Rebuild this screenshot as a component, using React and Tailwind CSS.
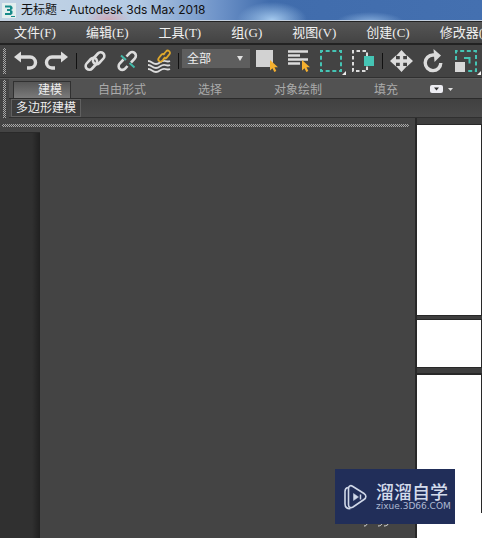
import React, { useState } from "react";

const menus = [
  ["文件", "(F)"],
  ["编辑", "(E)"],
  ["工具", "(T)"],
  ["组", "(G)"],
  ["视图", "(V)"],
  ["创建", "(C)"],
  ["修改器", "(M)"],
];

const tabs = ["自由形式", "选择", "对象绘制", "填充"];

function ToolButton({ label, children }) {
  return (
    <button type="button" aria-label={label} className="size-6 shrink-0 hover:bg-[#555]">
      <svg viewBox="0 0 24 24" fill="none" className="block size-6 overflow-visible">
        {children}
      </svg>
    </button>
  );
}

function Chain() {
  return (
    <g stroke="#dcdcdc" strokeWidth="2.600" strokeLinejoin="round">
      <path d="M9.800 9 13.900 4.500a3.700 3.700 0 0 1 5.500 5l-4.200 4.500a3.700 3.700 0 0 1-3.800 1" />
      <path d="M12.200 15 8.100 19.500a3.700 3.700 0 0 1-5.500-5l4.200-4.500a3.700 3.700 0 0 1 3.800-1" />
      <path d="M10.500 9a3.700 3.700 0 0 1 1.700 6M11.500 15a3.700 3.700 0 0 1-1.700-6" />
    </g>
  );
}

function BrokenChain() {
  return (
    <g strokeWidth="2.600">
      <path d="M10.500 7.500 13.400 4.300a3.700 3.700 0 0 1 5.500 5l-3.900 4.200" stroke="#dcdcdc" />
      <path d="M11.500 17 9.100 19.700a3.700 3.700 0 0 1-5.500-5l3.900-4.200" stroke="#dcdcdc" />
      <path d="M5 6.500l5 4.500M13.500 14l5 4.500" stroke="#43b8a8" strokeWidth="2" />
    </g>
  );
}

function Cursor() {
  return <path d="M14 11v10.500l2.500-2.300 1.800 3.800 2-1-1.800-3.700h3.500z" fill="#f5b02e" />;
}

function Grip({ className }) {
  return (
    <div
      className={`shrink-0 bg-[conic-gradient(#a8a8a8_25%,transparent_0_50%,#a8a8a8_0_75%,transparent_0)] bg-[length:2px_2px] ${className}`}
    />
  );
}

function Toolbar() {
  return (
    <div className="flex h-[33px] items-center overflow-hidden border-b border-[#303030] bg-[#434343]">
      <Grip className="ml-[3px] mr-[8px] h-[26px] w-[3px]" />
      <div className="flex shrink-0 gap-2">
        <ToolButton label="撤消">
          <path d="M5 8h11a5 5 0 0 1 0 11H13" stroke="#dcdcdc" strokeWidth="3.400" />
          <path d="M0 8 7 2.500v11z" fill="#dcdcdc" />
        </ToolButton>
        <ToolButton label="重做">
          <path d="M17 8H6a5 5 0 0 0 0 11H9" stroke="#dcdcdc" strokeWidth="3.400" />
          <path d="M22 8 15 2.500v11z" fill="#dcdcdc" />
        </ToolButton>
      </div>
      <div className="ml-[6px] mr-[7px] h-4 w-px shrink-0 bg-[#111]" />
      <div className="flex shrink-0 gap-2">
        <ToolButton label="选择并链接">
          <Chain />
        </ToolButton>
        <ToolButton label="取消链接选择">
          <BrokenChain />
        </ToolButton>
        <ToolButton label="绑定到空间扭曲">
          <path
            d="M0 12c4 0 4 3 8 3s5-4 9-3c2 .5 3 1 5 0M0 16c4 0 4 3 8 3s5-4 9-3c2 .5 3 1 5 0M0 20c4 0 4 3 8 3s5-4 9-3c2 .5 3 1 5 0"
            stroke="#dcdcdc"
            strokeWidth="1.800"
          />
          <path
            d="M15 6l3-3.500a2.200 2.200 0 0 1 3.500 2.700l-3 3.600a2.200 2.200 0 0 1-3.200 0M17.500 8l-3.200 3.700a2.200 2.200 0 0 1-3.500-2.700l2.700-3.300a2.200 2.200 0 0 1 3.300 0"
            stroke="#e0a92c"
            strokeWidth="1.800"
          />
        </ToolButton>
      </div>
      <div className="ml-[6px] mr-[3px] h-4 w-px shrink-0 bg-[#111]" />
      <div className="relative mb-[5px] mr-[6px] w-[68px] shrink-0">
        <select
          aria-label="选择过滤器"
          className="block h-[19px] w-full appearance-none bg-[#5e5e5e] pl-[5px] text-xs leading-[19px] text-[#eee] outline-none"
        >
          <option>全部</option>
        </select>
        <svg viewBox="0 0 6 5" className="pointer-events-none absolute right-[7px] top-[7px] h-[5px] w-[6px]">
          <path d="M0 0h6L3 5z" fill="#e0e0e0" />
        </svg>
      </div>
      <div className="flex shrink-0 gap-2">
        <ToolButton label="选择对象">
          <path d="M0 1h17v17H0z" fill="#d2d2d2" />
          <Cursor />
        </ToolButton>
        <ToolButton label="按名称选择">
          <path d="M0 2.500h20M0 6.500h12M0 10.500h20M0 14.500h12" stroke="#dcdcdc" strokeWidth="2.400" />
          <Cursor />
        </ToolButton>
        <ToolButton label="矩形选择区域">
          <path d="M1 2h20v20H1z" stroke="#45c4b4" strokeWidth="2" strokeDasharray="4 2.667" strokeDashoffset="2" />
          <path d="M26 22v4h-4z" fill="#eee" />
        </ToolButton>
        <ToolButton label="窗口/交叉">
          <path d="M15 7V2H1v20h14v-5" stroke="#dcdcdc" strokeWidth="2" strokeDasharray="3.500 2.500" />
          <path d="M12 7h10v10H12z" fill="#45c4b4" />
        </ToolButton>
      </div>
      <div className="ml-[6px] mr-[7px] h-4 w-px shrink-0 bg-[#111]" />
      <div className="flex shrink-0 gap-2">
        <ToolButton label="选择并移动">
          <path d="M11.500 4v16M3 12h17" stroke="#dcdcdc" strokeWidth="3.400" />
          <path d="M11.500 1l5.500 6H6zM11.500 23l5.500-6H6zM0 12l6-5.500v11zM23 12l-6-5.500v11z" fill="#dcdcdc" />
        </ToolButton>
        <ToolButton label="选择并旋转">
          <path d="M13 6h-2a7.800 7.800 0 1 0 7.800 8" stroke="#dcdcdc" strokeWidth="3.400" />
          <path d="M11.500 0 19 6.500 12.500 13z" fill="#dcdcdc" />
        </ToolButton>
        <ToolButton label="选择并缩放">
          <path d="M2 11V2h20v20H12" stroke="#45c4b4" strokeWidth="2" strokeDasharray="4 2.600" />
          <path d="M1 13h10v10H1z" fill="#d8d8d8" />
          <path d="M10 9h5.500v5.500" stroke="#45c4b4" strokeWidth="2" />
          <path d="M27 22v4h-4z" fill="#eee" />
        </ToolButton>
      </div>
    </div>
  );
}

function Ribbon() {
  const [active, setActive] = useState("建模");

  return (
    <div className="flex border-t border-[#5c5c5c] bg-[#434343]">
      <Grip className="mx-[3px] mt-px w-[3px]" />
      <div className="min-w-0 flex-1 overflow-hidden">
        <div className="flex h-5 items-end border-b border-[#2b2b2b] bg-[#525252] pl-1">
          <button
            type="button"
            onClick={() => setActive("建模")}
            aria-pressed={active === "建模"}
            className="mr-px h-[17px] w-[58px] shrink-0 border border-b-0 border-[#303030] bg-linear-to-b from-[#565656] to-[#7a7a7a] pl-4 text-xs leading-4 text-[#eee]"
          >
            建模
          </button>
          {tabs.map((tab) => (
            <button
              key={tab}
              type="button"
              onClick={() => setActive(tab)}
              aria-pressed={active === tab}
              className="h-[17px] shrink-0 px-[26px] text-xs leading-4 text-[#aaa]"
            >
              {tab}
            </button>
          ))}
          <button type="button" aria-label="功能区显示" className="mb-[5px] ml-[6px] shrink-0">
            <svg viewBox="0 0 24 8" className="block h-2 w-6">
              <rect width="13" height="8" rx="2" fill="#ededf2" />
              <path d="M4 2.500h5L6.500 5.500z" fill="#333" />
              <path d="M18 3h5l-2.500 3z" fill="#ddd" />
            </svg>
          </button>
        </div>
        <div className="flex h-[19px] border-b border-[#303030] bg-linear-to-b from-[#414141] to-[#4a4a4a] pl-[2px]">
          <button
            type="button"
            className="h-[18px] shrink-0 border border-[#606060] bg-[#3c3c3c] px-1 text-xs leading-4 text-[#eee]"
          >
            多边形建模
          </button>
        </div>
      </div>
    </div>
  );
}

function Watermark() {
  return (
    <div className="absolute bottom-[14px] right-[27px] flex h-[55px] w-[120px] items-center bg-[#212e59] pl-[9px]">
      <svg viewBox="0 0 24 26" fill="none" className="h-[26px] w-6 shrink-0" stroke="#cfd7e8" strokeLinejoin="round">
        <path d="M4.500 4.500c0-2.500 2-3.500 4-2.300l11.500 7.300c2.500 1.600 2.500 4.400 0 6L9 23c-2.300 1.400-4.500.3-4.500-2.200z" strokeWidth="1.600" />
        <path d="M4 3.500C1.800 4 1 5.400 1 7.500V20c0 3.500 2.500 5 5.500 4.500" strokeWidth="1.600" />
        <path d="M9.500 9.500v7l5-3.500z" fill="#cfd7e8" strokeWidth=".5" />
        <path d="M16.500 10.500v5" strokeWidth="1.500" />
      </svg>
      <div className="ml-2 text-[#d3dbeb]">
        <div className="text-[18px] font-medium leading-[18px]">溜溜自学</div>
        <div className="font-['DejaVu_Sans'] text-[9px] leading-[10px] text-[#aeb9d2]">zixue.3D66.COM</div>
      </div>
    </div>
  );
}

export default function App() {
  return (
    <div className="relative flex min-h-screen flex-col overflow-hidden bg-[#444] font-['Noto_Sans','Noto_Sans_CJK_SC',sans-serif]">
      <header className="flex h-[21px] items-center overflow-hidden border-b border-[#c3cfdf] bg-[radial-gradient(ellipse_35px_18px_at_272px_20px,#a4c9ee,transparent),radial-gradient(ellipse_34px_10px_at_370px_22px,#86addb,transparent),radial-gradient(ellipse_24px_12px_at_108px_20px,#cfa8b5,transparent),linear-gradient(to_right,#c3d4e4,#b5cbe4_28%,#6f94c9_45%,#406cac_56%,#4470b0)]">
        <svg viewBox="0 0 14 15" fill="none" className="ml-[2px] h-[15px] w-[14px] shrink-0">
          <path d="M0 0h14v15H0z" fill="#e3eeee" />
          <path d="M3 2.500h6l1.500 1.500v2L9 7l1.500 1v2.500L9 12H3v-2h5V8H5V6h3V4.500H3z" fill="#168a89" />
          <path d="M9 13.500h4" stroke="#168a89" />
        </svg>
        <h1 className="ml-[5px] whitespace-nowrap font-['Inter','Noto_Sans_CJK_SC',sans-serif] text-xs leading-5 text-[#111]">
          无标题 - Autodesk 3ds Max 2018
        </h1>
      </header>
      <nav className="flex h-6 items-center gap-[30px] overflow-hidden border-b-2 border-t border-[#222] bg-linear-to-b from-[#565656] to-[#434343] pl-[14px] text-[13px] leading-5 text-[#f0f0f0]">
        {menus.map(([name, key]) => (
          <button
            key={name}
            type="button"
            className="shrink-0 whitespace-nowrap font-['Liberation_Serif','Noto_Sans_CJK_SC',serif]"
          >
            {name}
            {key}
          </button>
        ))}
      </nav>
      <Toolbar />
      <Ribbon />
      <main className="flex flex-1">
        <section className="flex min-w-0 flex-1 flex-col">
          <Grip className="ml-[2px] mr-[6px] mt-[6px] h-[3px]" />
          <div className="mt-[5px] w-10 flex-1 border-t border-[#2a2a2a] bg-linear-to-r from-[#303030] from-80% to-[#202020]" />
        </section>
        <section className="flex w-[67px] shrink-0 flex-col border-l-2 border-[#282828] bg-[#3e3e3e] pt-[6px]">
          <div className="h-[192px] border-b border-r border-t border-[#282828] bg-white" />
          <div className="mt-[3px] h-[49px] border-b border-r border-t border-[#282828] bg-white" />
          <div className="mt-[5px] h-[140px] border-r border-t-2 border-[#282828] bg-white" />
          <div className="flex-1 bg-white" />
        </section>
      </main>
      <svg viewBox="0 0 26 4" className="absolute bottom-[11px] right-[92px] h-1 w-[26px]">
        <path d="M0 3c2 0 3-1 3-3M14 3c2 0 4-1 4-3M20 3c2 0 4-1 5-3" fill="none" stroke="#ddd" />
      </svg>
      <Watermark />
    </div>
  );
}
